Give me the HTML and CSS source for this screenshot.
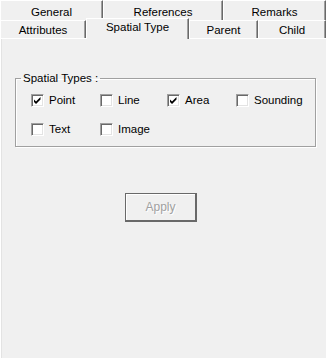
FILE: index.html
```html
<!DOCTYPE html>
<html lang="en">
<head>
    <meta charset="UTF-8">
    <title>Spatial Type</title>
    <link rel="stylesheet" href="styles.css">
</head>
<body>
    <div class="tabs">
        <div class="tab-row back">
            <div class="tab w-general">General</div>
            <div class="tab w-references">References</div>
            <div class="tab w-remarks">Remarks</div>
        </div>
        <div class="tab-row front">
            <div class="tab w-attributes">Attributes</div>
            <div class="tab w-spatial selected">Spatial Type</div>
            <div class="tab w-parent">Parent</div>
            <div class="tab w-child">Child</div>
        </div>
    </div>

    <div class="panel">
        <fieldset class="group">
            <legend>Spatial Types :</legend>
            <div class="checks">
                <label class="check"><span class="box on"></span>Point</label>
                <label class="check"><span class="box"></span>Line</label>
                <label class="check"><span class="box on"></span>Area</label>
                <label class="check"><span class="box"></span>Sounding</label>
                <label class="check"><span class="box"></span>Text</label>
                <label class="check"><span class="box"></span>Image</label>
            </div>
        </fieldset>
        <button class="apply" disabled>Apply</button>
    </div>
</body>
</html>
```

FILE: styles.css
```css
:root {
    --face: #f0f0f0;
    --light: #ffffff;
    --shadow: #a0a0a0;
    --dark: #696969;
}

body {
    margin: 0;
    width: 326px;
    height: 358px;
    overflow: hidden;
    background-color: var(--face);
    font-family: "Liberation Sans", Arial, sans-serif;
    font-size: 11.5px;
    color: #000;
}

/* Tabs */
.tab-row {
    display: flex;
}

.tab {
    box-sizing: border-box;
    text-align: center;
    border-top: 1px solid var(--light);
    border-left: 1px solid var(--light);
    border-right: 1px solid var(--dark);
    box-shadow: inset -1px 0 0 var(--shadow);
    background-color: var(--face);
}

.back .tab {
    height: 20px;
    padding-top: 3px;
    line-height: 16px;
}

.front .tab {
    height: 18px;
    line-height: 18px;
}

.front .tab.selected {
    position: relative;
    z-index: 1;
    height: 21px;
    margin-top: -2px;
    margin-bottom: -1px;
    line-height: 17px;
}

.w-general { width: 103px; }
.w-references { width: 120px; }
.w-remarks { flex: 1; }
.w-attributes { width: 86px; }
.w-spatial { width: 103px; }
.w-parent { width: 69px; }
.w-child { flex: 1; }

/* Panel */
.panel {
    box-sizing: border-box;
    height: 320px;
    border-top: 1px solid var(--light);
    border-left: 1px solid var(--light);
    box-shadow: inset 1px 0 0 #e3e3e3;
}

.group {
    margin: 32px 10px 0 14px;
    padding: 9px 0 10px 0;
    border: 1px solid var(--shadow);
    box-shadow: 1px 1px 0 var(--light), inset 1px 1px 0 var(--light);
}

.group legend {
    margin-left: 5px;
    padding: 0 2px;
    line-height: 14px;
}

.checks {
    display: grid;
    grid-template-columns: 69px 67px 69px auto;
    row-gap: 16px;
    padding-left: 15px;
}

.check {
    display: flex;
    align-items: center;
    gap: 5px;
    height: 13px;
    line-height: 13px;
}

.box {
    box-sizing: border-box;
    width: 13px;
    height: 13px;
    background-color: #fff;
    border-top: 1px solid var(--shadow);
    border-left: 1px solid var(--shadow);
    border-right: 1px solid var(--light);
    border-bottom: 1px solid var(--light);
    box-shadow: inset 1px 1px 0 var(--dark), inset -1px -1px 0 #e3e3e3;
}

.box.on {
    background-image: url("data:image/svg+xml,%3Csvg xmlns='http://www.w3.org/2000/svg' width='11' height='11'%3E%3Cpath d='M2 4.5 L4 6.5 L8.5 2 V4.5 L4 9 L2 7 Z' fill='%23000'/%3E%3C/svg%3E");
    background-repeat: no-repeat;
    background-position: 0 0;
}

/* Button */
.apply {
    display: block;
    box-sizing: border-box;
    width: 72px;
    height: 29px;
    margin: 46px 0 0 124px;
    padding: 0;
    font-family: inherit;
    font-size: 12px;
    color: var(--shadow);
    text-shadow: 1px 1px 0 var(--light);
    background-color: var(--face);
    border: 1px solid var(--dark);
    border-right-width: 2px;
    border-bottom-width: 2px;
    box-shadow: inset 1px 1px 0 var(--light);
}
```
